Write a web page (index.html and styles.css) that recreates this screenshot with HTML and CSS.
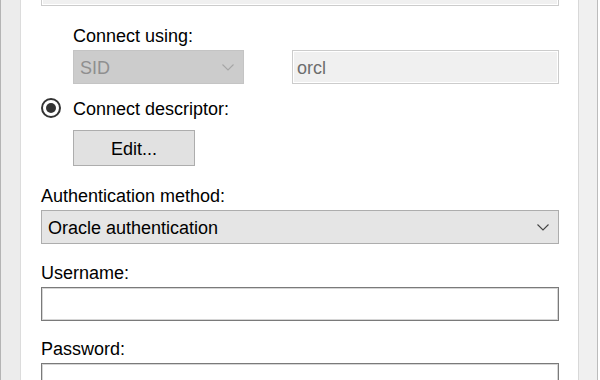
FILE: index.html
```html
<!DOCTYPE html>
<html lang="en">
<head>
  <meta charset="UTF-8" />
  <title>Connection</title>
  <link rel="stylesheet" href="styles.css">
</head>
<body>
  <div class="window">
    <!-- left frame edge -->
    <div class="rail rail-left"></div>

    <div class="panel">
      <!-- field scrolled off the top -->
      <div class="textbox disabled top-box"><div class="top-fill"></div></div>

      <div class="sub">
        <div class="label">Connect using:</div>
        <div class="row">
          <div class="combo disabled sid">
            <span>SID</span>
            <svg class="chev" width="12" height="7" viewBox="0 0 12 7"><path d="M0.5 0.5 L6 6 L11.5 0.5" fill="none" stroke="currentColor" stroke-width="1.1"/></svg>
          </div>
          <div class="textbox disabled sid-value">orcl</div>
        </div>
      </div>

      <label class="radio">
        <span class="dot"></span>
        <span class="radio-text">Connect descriptor:</span>
      </label>

      <div class="sub">
        <button class="btn" type="button">Edit...</button>
      </div>

      <div class="label auth-label">Authentication method:</div>
      <div class="combo">
        <span>Oracle authentication</span>
        <svg class="chev" width="12" height="7" viewBox="0 0 12 7"><path d="M0.5 0.5 L6 6 L11.5 0.5" fill="none" stroke="currentColor" stroke-width="1.1"/></svg>
      </div>

      <div class="label user-label">Username:</div>
      <div class="textbox input"></div>

      <div class="label pass-label">Password:</div>
      <div class="textbox input"></div>
    </div>

    <!-- right frame edge -->
    <div class="rail rail-right"></div>
  </div>
</body>
</html>
```

FILE: styles.css
```css
/* Base */
body {
  margin: 0;
  font-family: "Liberation Sans", Arial, sans-serif;
  font-size: 18px;
  color: #000;
  background: #fff;
}
.window {
  display: flex;
  height: 380px;
  overflow: hidden;
}
/* Frame edges */
.rail {
  background: #ececec;
}
.rail-left {
  width: 19px;
  border-left: 1px solid #b4b4b4;
  border-right: 1px solid #dcdcdc;
}
.rail-right {
  width: 18px;
  border-left: 1px solid #d8d8d8;
  border-right: 1px solid #bcbcbc;
  margin-right: 2px;
  background: #f0f0f0;
}
/* Dialog body */
.panel {
  flex: 1;
  padding: 0 19px 0 20px;
}
.sub {
  padding-left: 32px;
}
.label {
  box-sizing: border-box;
  height: 20px;
  line-height: 20px;
  padding-top: 2px;
  margin-bottom: 6px;
}
.sub .label {
  margin-top: 18px;
}
.auth-label {
  margin-top: 18px;
}
.user-label {
  margin-top: 17px;
}
.pass-label {
  margin-top: 16px;
}
/* Text boxes */
.textbox {
  box-sizing: border-box;
  height: 34px;
  border: 1px solid #7a7a7a;
  background: #fff;
}
.textbox.disabled {
  border-color: #cccccc;
  background: #f0f0f0;
  box-shadow: inset 0 0 0 1px #fff;
  color: #6d6d6d;
}
.top-box {
  margin-top: -28px;
  background: #fff;
  padding: 2px 31px 2px 2px;
}
.top-fill {
  height: 100%;
  background: #f0f0f0;
}
.input {
  box-shadow: inset 0 0 0 1px #d6d6d6;
}
/* Combos */
.combo {
  box-sizing: border-box;
  height: 34px;
  display: flex;
  align-items: center;
  justify-content: space-between;
  padding: 2px 9px 0 6px;
  border: 1px solid #adadad;
  background: #e5e5e5;
  color: #000;
}
.combo .chev {
  color: #444;
  margin-top: -1px;
}
.combo.disabled {
  border-color: #c4c4c4;
  background: #cccccc;
  color: #8f8f8f;
}
.combo.disabled .chev {
  color: #a6a6a6;
}
.row {
  display: flex;
  gap: 48px;
}
.sid {
  width: 171px;
}
.sid-value {
  flex: 1;
  line-height: 32px;
  padding: 1px 0 0 4px;
}
/* Radio */
.radio {
  display: flex;
  align-items: center;
  gap: 12px;
  height: 20px;
  margin-top: 14px;
}
.radio-text {
  padding-top: 3px;
}
.dot {
  box-sizing: border-box;
  width: 20px;
  height: 20px;
  border: 2px solid #333;
  border-radius: 50%;
  display: flex;
  align-items: center;
  justify-content: center;
}
.dot::after {
  content: "";
  width: 10px;
  height: 10px;
  border-radius: 50%;
  background: #333;
}
/* Button */
.btn {
  display: block;
  margin-top: 12px;
  width: 122px;
  height: 36px;
  border: 1px solid #adadad;
  background: #e1e1e1;
  font: inherit;
  color: #000;
  padding: 3px 0 0;
}
```
